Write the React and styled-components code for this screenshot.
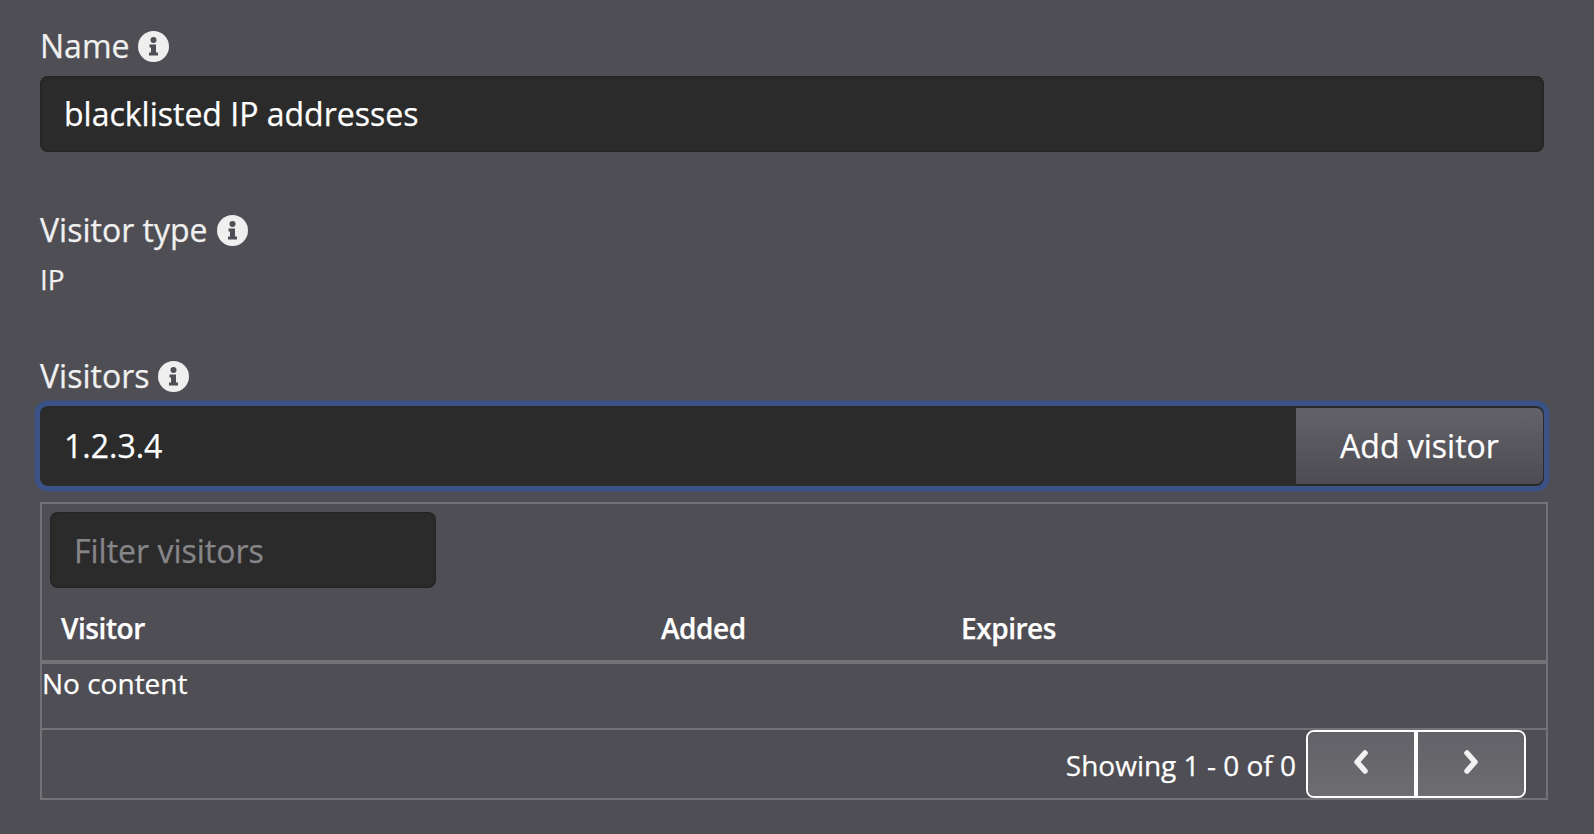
import React from "react";
import styled, { createGlobalStyle } from "styled-components";

const Global = createGlobalStyle`
  html, body { margin: 0; padding: 0; height: 100%; background: #4f4e54; }
  body { font-family: "Open Sans", "Noto Sans", sans-serif; color: #fff; overflow: hidden; -webkit-text-stroke: 0.25px currentColor; }
`;
const Page = styled.div`
  width: 1594px; height: 834px; box-sizing: border-box; padding: 27px 46px 0 40px; background: #4f4e54;
`;
const Label = styled.div`
  display: flex; align-items: center; gap: 9px; height: 38px; font-size: 32px; line-height: 38px;
  color: #f0f0f0; margin-top: ${p => p.$top || 0}px;
`;
const Info = styled.svg`
  width: 31px; height: 31px; flex: none;
`;
const TextInput = styled.div`
  box-sizing: border-box; height: 76px; margin-top: 11px; margin-right: 4px; padding: 0 24px 2px;
  display: flex; align-items: center; background: #2b2b2b; border-radius: 8px;
  box-shadow: inset 0 0 3px rgba(0,0,0,.45);
  font-size: 32px; color: #fff;
`;
const Value = styled.div`
  font-size: 28px; line-height: 38px; margin-top: 11px; color: #f0f0f0;
`;
const Focused = styled.div`
  display: flex; height: 80px; margin: 11px 4px 0 0; background: #2b2b2b; border-radius: 8px;
  box-shadow: 0 0 0 5.5px #3b5286; overflow: hidden; padding: 2px 0;
  box-sizing: border-box;
`;
const FocusedText = styled.div`
  flex: 1; display: flex; align-items: center; padding: 0 0 2px 24px; font-size: 32px;
`;
const AddButton = styled.div`
  width: 247px; margin-right: 1px; padding-bottom: 2px; display: flex; align-items: center; justify-content: center;
  background: linear-gradient(#636268, #4d4c52); border-radius: 0 7px 7px 0;
  font-size: 32px;
`;
const TableBox = styled.div`
  box-sizing: border-box; margin-top: 16px; height: 298px; border: 2px solid #737277; display: flex; flex-direction: column;
`;
const FilterWrap = styled.div`
  padding: 8px 8px 0;
`;
const Filter = styled.div`
  box-sizing: border-box; width: 386px; height: 76px; padding-left: 24px; display: flex; align-items: center;
  background: #2b2b2b; border-radius: 8px; box-shadow: inset 0 0 3px rgba(0,0,0,.45);
  font-size: 32px; color: #868688;
`;
const HeadRow = styled.div`
  display: grid; grid-template-columns: 600px 300px 1fr; height: 76px; align-items: center;
  padding: 8px 0 0 19px; box-sizing: border-box; border-bottom: 4px solid #737277;
  font-size: 28px; font-weight: 600; letter-spacing: -0.45px;
`;
const Empty = styled.div`
  height: 66px; box-sizing: border-box; font-size: 28px; line-height: 38px;
  border-bottom: 2px solid #737277;
`;
const Footer = styled.div`
  flex: 1; display: flex; justify-content: flex-end; align-items: center; gap: 10px; padding-right: 20px;
  font-size: 28px;
`;
const Status = styled.span`
  margin-top: 2px;
`;
const Pager = styled.div`
  display: flex; width: 220px; height: 68px; border: 2px solid #fff; border-radius: 8px; box-sizing: border-box; overflow: hidden;
`;
const PageBtn = styled.div`
  flex: 1; display: flex; align-items: center; justify-content: center;
  background: linear-gradient(#636268, #6d6c71);
  & + & { border-left: 4px solid #fff; }
`;
const Chevron = styled.svg`
  width: 20px; height: 26px; margin-top: -5px;
`;

const InfoIcon = () => (
  <Info viewBox="0 0 31 31">
    <circle cx="15.5" cy="15.5" r="15.5" fill="#efefef" />
    <circle cx="15.5" cy="9" r="3" fill="#4f4e54" />
    <path d="M11.5 13.500h6.500v8h2v3h-9v-3h2v-5h-1.500z" fill="#4f4e54" />
  </Info>
);

export default function App() {
  return (
    <Page>
      <Global />
      <Label>Name <InfoIcon /></Label>
      <TextInput>blacklisted IP addresses</TextInput>
      <Label $top={59}>Visitor type <InfoIcon /></Label>
      <Value>IP</Value>
      <Label $top={59}>Visitors <InfoIcon /></Label>
      <Focused>
        <FocusedText>1.2.3.4</FocusedText>
        <AddButton>Add visitor</AddButton>
      </Focused>
      <TableBox>
        <FilterWrap><Filter>Filter visitors</Filter></FilterWrap>
        <HeadRow><span>Visitor</span><span>Added</span><span>Expires</span></HeadRow>
        <Empty>No content</Empty>
        <Footer>
          <Status>Showing 1 - 0 of 0</Status>
          <Pager>
            <PageBtn><Chevron viewBox="0 0 20 26"><path d="M14 4 L6 13 L14 22" fill="none" stroke="#f2f2f2" strokeWidth="5.500" strokeLinecap="round" strokeLinejoin="round" /></Chevron></PageBtn>
            <PageBtn><Chevron viewBox="0 0 20 26"><path d="M6 4 L14 13 L6 22" fill="none" stroke="#f2f2f2" strokeWidth="5.500" strokeLinecap="round" strokeLinejoin="round" /></Chevron></PageBtn>
          </Pager>
        </Footer>
      </TableBox>
    </Page>
  );
}
